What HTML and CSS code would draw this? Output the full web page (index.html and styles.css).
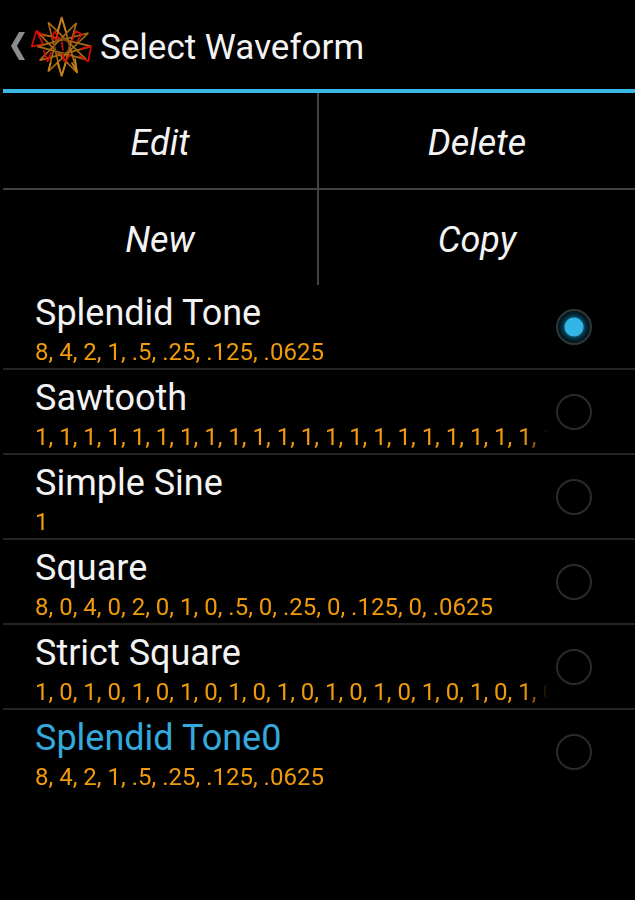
FILE: index.html
```html
<!DOCTYPE html>
<html lang="en">
<head>
<meta charset="utf-8">
<meta name="viewport" content="width=device-width, initial-scale=1">
<title>Select Waveform</title>
<link rel="stylesheet" href="styles.css">
</head>
<body>
<header class="bar">
  <a class="up" href="#" aria-label="Back">
    <svg class="chevron" viewBox="0 0 14 28" aria-hidden="true"><path d="M8 0h6L6 14l8 14H8L0 14z"/></svg>
    <svg class="logo" viewBox="3 6 189 186" aria-hidden="true">
      <g fill="none" stroke-width="5" stroke-linejoin="bevel">
        <path stroke="#a86a14" d="M98 12L145 180 30 62 187 100 32 142 142 30 98 190 58 28 172 140 25 100 178 60 58 175z"/>
        <circle cx="98" cy="100" r="23" stroke="#7a4a10"/>
        <path stroke="#c88418" d="M85 56l13-42 13 42M85 148l13 40 13-40M128 148l16 30-6-42M66 148l-8 26"/>
        <path stroke="#d80c06" d="M22 53L8 101l34-8zM22 53l26 18M77 54l12 22M77 54l-8 22 20 0M140 54l-12 32M140 54l18 10-14 22M186 100l-8 46-28-18M186 100l-32 8M44 112l12 34 10-28M106 146l-6-26M108 148l16-24M98 86l4 26"/>
      </g>
    </svg>
  </a>
  <h1 class="heading">Select Waveform</h1>
</header>
<main>
  <div class="actions">
    <button class="action" type="button">Edit</button>
    <button class="action" type="button">Delete</button>
    <button class="action" type="button">New</button>
    <button class="action" type="button">Copy</button>
  </div>
  <div class="list" role="radiogroup" aria-label="Waveform">
    <label class="row"><span class="text"><span class="name">Splendid Tone</span><span class="detail">8, 4, 2, 1, .5, .25, .125, .0625</span></span><input class="radio" type="radio" name="wave" checked></label>
    <label class="row"><span class="text"><span class="name">Sawtooth</span><span class="detail">1, 1, 1, 1, 1, 1, 1, 1, 1, 1, 1, 1, 1, 1, 1, 1, 1, 1, 1, 1, 1, 1</span></span><input class="radio" type="radio" name="wave"></label>
    <label class="row"><span class="text"><span class="name">Simple Sine</span><span class="detail">1</span></span><input class="radio" type="radio" name="wave"></label>
    <label class="row"><span class="text"><span class="name">Square</span><span class="detail">8, 0, 4, 0, 2, 0, 1, 0, .5, 0, .25, 0, .125, 0, .0625</span></span><input class="radio" type="radio" name="wave"></label>
    <label class="row"><span class="text"><span class="name">Strict Square</span><span class="detail">1, 0, 1, 0, 1, 0, 1, 0, 1, 0, 1, 0, 1, 0, 1, 0, 1, 0, 1, 0, 1, 0</span></span><input class="radio" type="radio" name="wave"></label>
    <label class="row"><span class="text"><span class="name current">Splendid Tone0</span><span class="detail">8, 4, 2, 1, .5, .25, .125, .0625</span></span><input class="radio" type="radio" name="wave"></label>
  </div>
</main>
</body>
</html>
```
FILE: styles.css
```css
* {
  box-sizing: border-box;
}

body {
  margin: 0;
  padding-left: 3px;
  min-height: 100vh;
  background: #000;
  color: #f3f3f3;
  font-family: Roboto, "Liberation Sans", sans-serif;
}

.bar {
  display: flex;
  align-items: center;
  gap: 7px;
  height: 93px;
  padding: 3px 0 0 8px;
  border-bottom: 4px solid #3cb8e6;
}

.up {
  display: flex;
  align-items: center;
  gap: 5px;
}

.chevron {
  width: 14px;
  height: 28px;
  fill: #8c8c8c;
}

.logo {
  width: 63px;
  height: 62px;
}

.heading {
  margin: 0;
  padding-top: 4px;
  font-size: 35px;
  font-weight: 400;
  line-height: 42px;
}

.actions {
  display: grid;
  grid-template: 97px 95px / 1fr 1fr;
}

.action {
  padding: 5px 0 0;
  border: 0 solid #424242;
  background: none;
  color: inherit;
  font: italic 36px/42px Roboto, "Liberation Sans", sans-serif;
}

.action:nth-child(odd) {
  border-right-width: 2px;
}

.action:nth-child(-n + 2) {
  border-bottom-width: 2px;
}

.row {
  display: flex;
  align-items: center;
  gap: 8px;
  height: 85px;
  padding: 0 43px 0 32px;
  border-bottom: 2px solid #242424;
}

.row:last-child {
  border-bottom-color: transparent;
}

.text {
  flex: 1;
  min-width: 0;
}

.name,
.detail {
  display: block;
  white-space: nowrap;
  overflow: hidden;
}

.name {
  font-size: 36px;
  line-height: 50px;
}

.current {
  color: #33a9dc;
}

.detail {
  color: #f09a0c;
  font-size: 24px;
  line-height: 28px;
  -webkit-mask-image: linear-gradient(to right, #000 calc(100% - 24px), transparent);
  mask-image: linear-gradient(to right, #000 calc(100% - 24px), transparent);
}

.radio {
  appearance: none;
  flex: none;
  width: 36px;
  height: 36px;
  margin: 0;
  border: 2px solid #2a2a2a;
  border-radius: 50%;
}

.radio:checked {
  border-color: #303638;
  background: radial-gradient(circle, #33b5e5 0 9px, #07465e 10px, #042430 13px, #020e12 17px);
}
```
